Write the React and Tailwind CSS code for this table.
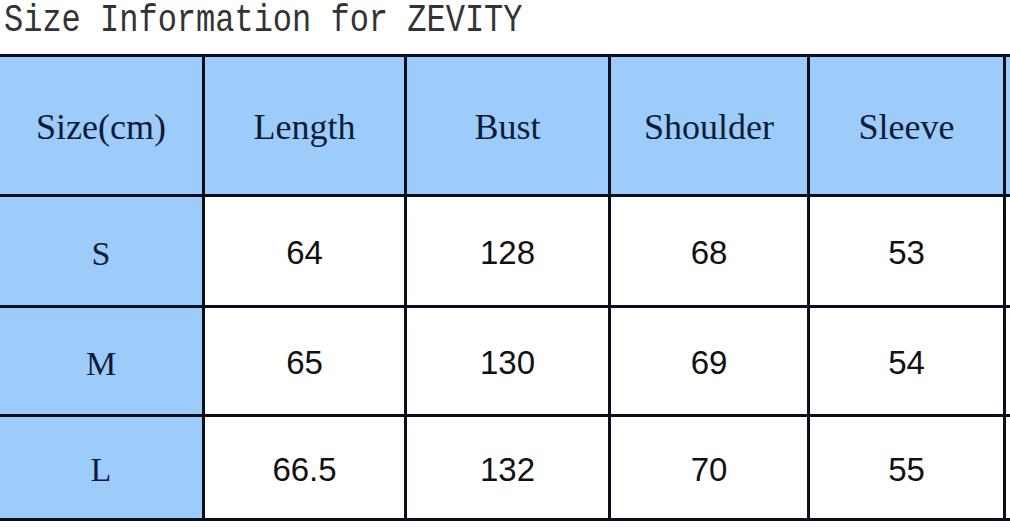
import React from "react";

const header = ["Size(cm)", "Length", "Bust", "Shoulder", "Sleeve", ""];
const rows = [
  { size: "S", vals: ["64", "128", "68", "53"], h: "h-[108px]" },
  { size: "M", vals: ["65", "130", "69", "54"], h: "h-[106px]" },
  { size: "L", vals: ["66.5", "132", "70", "55"], h: "h-[101px]" },
];

export default function App() {
  return (
    <div className="w-[1010px] h-[527px] bg-white overflow-hidden">
      <div
        className="h-[54px] pl-[4px] text-[32px] leading-[36px] text-[#333333] origin-top scale-y-[1.2]"
        style={{ fontFamily: '"Liberation Mono", "DejaVu Sans Mono", monospace' }}
      >
        Size Information for ZEVITY
      </div>
      <div className="w-[1010px] bg-[#0b0f1c] py-[3px] flex flex-col gap-[3px]">
        <div className="grid grid-cols-[202px_199px_201px_196px_193px_1fr] gap-x-[3px] h-[137px]">
          {header.map((h, i) => (
            <div
              key={i}
              className="bg-[#9dcbfa] flex items-center justify-center pt-[3px] text-[36px] text-[#0e1b36]"
              style={{ fontFamily: '"Liberation Serif", "Times New Roman", serif' }}
            >
              {h}
            </div>
          ))}
        </div>
        {rows.map((r) => (
          <div
            key={r.size}
            className={`grid grid-cols-[202px_199px_201px_196px_193px_1fr] gap-x-[3px] ${r.h}`}
          >
            <div
              className="bg-[#9dcbfa] flex items-center justify-center pt-[4px] text-[34px] text-[#0e1b36]"
              style={{ fontFamily: '"Liberation Serif", "Times New Roman", serif' }}
            >
              {r.size}
            </div>
            {r.vals.map((v, i) => (
              <div
                key={i}
                className="bg-white flex items-center justify-center pt-[4px] text-[33px] text-[#111111]"
                style={{ fontFamily: '"Liberation Sans", Arial, sans-serif' }}
              >
                {v}
              </div>
            ))}
            <div className="bg-white" />
          </div>
        ))}
      </div>
    </div>
  );
}
